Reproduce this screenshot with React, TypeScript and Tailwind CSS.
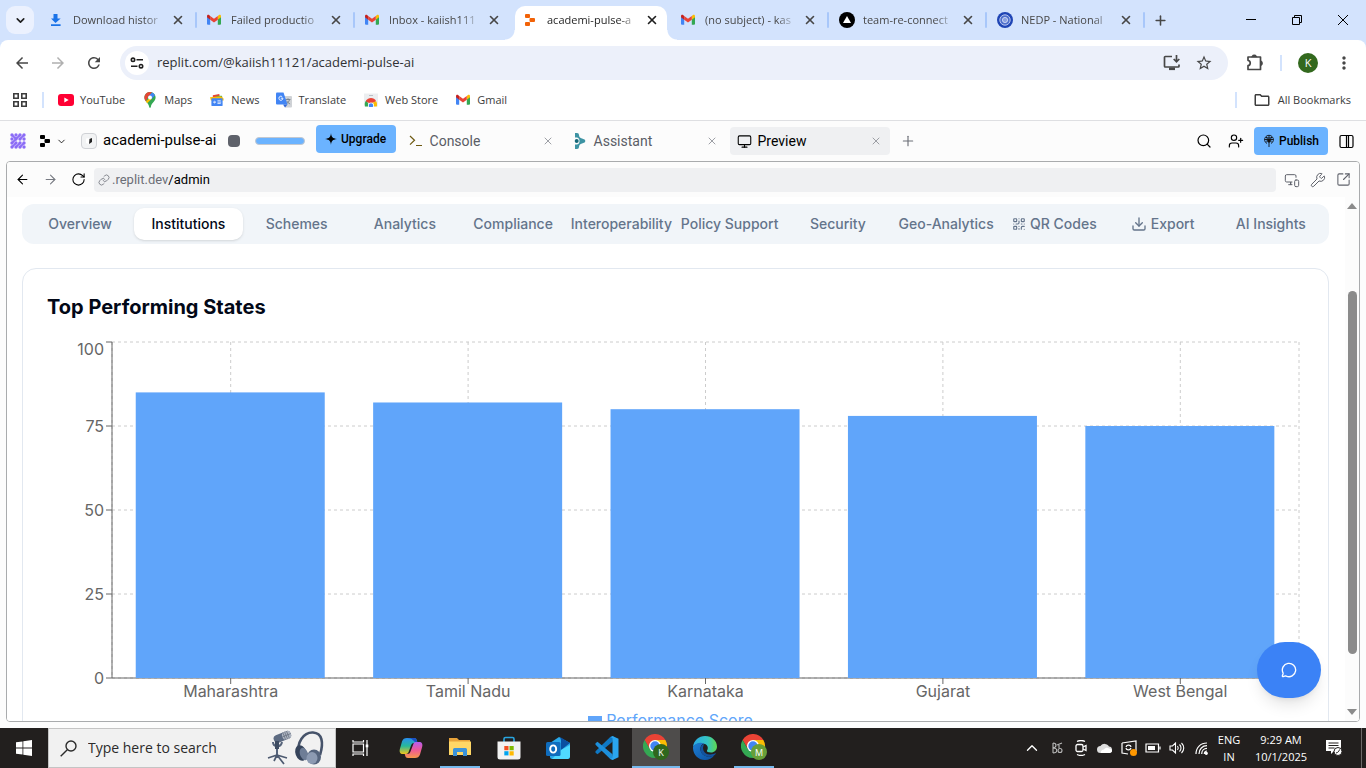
import React, { useEffect, useRef, useState } from 'react';
import {
  ArrowLeft,
  ArrowRight,
  ChevronDown,
  ChevronUp,
  Download,
  Link,
  MessageCircle,
  Monitor,
  MonitorSmartphone,
  Plus,
  QrCode,
  RotateCw,
  Search,
  SquareArrowOutUpRight,
  UserPlus,
  Wrench,
  X,
} from 'lucide-react';
import { MdArrowBack, MdArrowForward, MdMoreVert, MdOutlineFolder, MdRefresh, MdStarBorder } from 'react-icons/md';

type IconProps = { className?: string };

/* ---------- favicons and bookmark icons ---------- */

function GmailIcon({ className = 'w-3.5 h-3.5' }: IconProps) {
  return (
    <svg viewBox="0 0 24 24" className={className} aria-hidden="true">
      <path d="M0 6v12.500A1.600 1.600 0 0 0 1.600 20H5.500V10.300Z" fill="#4285f4" />
      <path d="M24 6v12.500a1.600 1.600 0 0 1-1.600 1.500h-3.900V10.300Z" fill="#34a853" />
      <path d="M18.500 5v6.500L24 7.400V5.600C24 3.200 21.600 2.600 20 3.800Z" fill="#fbbc04" />
      <path d="M5.500 11.500V5L12 9.800 18.500 5v6.500L12 16.400Z" fill="#ea4335" />
      <path d="M0 5.600v1.800l5.500 4.100V5L4 3.800C2.400 2.600 0 3.200 0 5.600Z" fill="#c5221f" />
    </svg>
  );
}

function DownloadFavicon() {
  return (
    <svg viewBox="0 0 14 14" className="w-3.5 h-3.5" aria-hidden="true">
      <path d="M4.500 1h4v4.500h3.200L6.500 10 2 5.500h2.500ZM2 11.200h9.600V13H2Z" fill="#1a73e8" />
    </svg>
  );
}

function ReplitIcon({ className = 'w-3.5 h-3.5', fill = '#f26207' }: IconProps & { fill?: string }) {
  return (
    <svg viewBox="0 0 14 14" className={className} fill={fill} aria-hidden="true">
      <rect x="2" y="1" width="5" height="4" rx="1" />
      <rect x="6.500" y="5" width="5.500" height="4" rx="1" />
      <rect x="2" y="9" width="5" height="4" rx="1" />
    </svg>
  );
}

function VercelIcon() {
  return (
    <svg viewBox="0 0 16 16" className="w-4 h-4" aria-hidden="true">
      <circle cx="8" cy="8" r="8" />
      <path d="m8 4 4 7H4Z" fill="#fff" />
    </svg>
  );
}

function NedpIcon() {
  return (
    <svg viewBox="0 0 16 16" className="w-4 h-4" aria-hidden="true">
      <circle cx="8" cy="8" r="8" fill="#1f45b5" />
      <circle cx="8" cy="8" r="5.200" fill="#4f70cc" stroke="#b6c5ef" strokeWidth="1" />
      <circle cx="8" cy="8" r="2.600" fill="#8ba1e0" stroke="#dbe3f8" strokeWidth="0.800" />
    </svg>
  );
}

function YouTubeIcon() {
  return (
    <svg viewBox="0 0 16 12" className="w-4 h-3" aria-hidden="true">
      <rect width="16" height="12" rx="3" fill="#f03" />
      <path d="m6.300 3.500 4.400 2.500-4.400 2.500Z" fill="#fff" />
    </svg>
  );
}

function MapsIcon() {
  return (
    <svg viewBox="0 0 12 16" className="w-3 h-4" aria-hidden="true">
      <path d="M6 0C2.700 0 .4 2.500.4 5.600c0 3.600 3.900 5.200 4.800 9.300.2 1.200 1.400 1.200 1.600 0 .9-4.100 4.800-5.700 4.800-9.300C11.600 2.500 9.300 0 6 0Z" fill="#34a853" />
      <path d="M6 0C4 0 2.500.9 1.500 2.200L4.400 4.500 8 .4A6 6 0 0 0 6 0Z" fill="#ea4335" />
      <path d="M8 .4 4.400 4.500 7.600 7 11 3.300C10.400 2 9.400.9 8 .4Z" fill="#4285f4" />
      <path d="M4.400 4.500 1.800 9.300C.9 8.100.4 7 .4 5.600c0-1.300.4-2.500 1.100-3.400Z" fill="#ea4335" />
      <path d="m7.600 7-4.400 4.300c-.5-.7-1-1.300-1.400-2L4.500 7Z" fill="#fbbc04" />
      <circle cx="6" cy="5.600" r="2" fill="#fff" />
    </svg>
  );
}

function NewsIcon() {
  return (
    <svg viewBox="0 0 15 13" className="w-3.5 h-3.5" aria-hidden="true">
      <path d="M3 1.500 10 0l.5 4H3Z" fill="#ea4335" />
      <path d="M7 2h6v4H7Z" fill="#34a853" />
      <path d="M0 3.500 12 2.500 14.500 5v2H1Z" fill="#fbbc04" />
      <rect x="1.500" y="4.500" width="12" height="8.500" rx="1" fill="#4285f4" />
      <path d="M6.300 8.600H5v.6h.6c-.3.9-1.700.7-1.700-.4 0-.9 1-1.200 1.600-.6M8 7.300h3.500M8 8.800h4M8 10.300h3.500" stroke="#fff" strokeWidth=".8" fill="none" />
    </svg>
  );
}

function TranslateIcon() {
  return (
    <svg viewBox="0 0 16 15" className="w-4 h-4" aria-hidden="true">
      <path d="M6 3.500h9a1 1 0 0 1 1 1V14a1 1 0 0 1-1 1H9Z" fill="#cfd2d6" />
      <path d="M9.500 7h5M12 5.800V7M13.500 7.200c-.5 2-2 3.500-3.500 4.300M10.600 8.300c.8 1.500 2 2.600 3.500 3.200" stroke="#6b7785" strokeWidth=".8" fill="none" />
      <path d="m7 12 2 3 2.500-3Z" fill="#3367d6" />
      <path d="M1 0h6.500L11.500 12H1a1 1 0 0 1-1-1V1a1 1 0 0 1 1-1Z" fill="#4285f4" />
      <path d="M4.800 5.700h2.100c-.1 2.900-4 2.700-4 .1 0-2.200 2.200-2.700 3.300-1.500" stroke="#fff" strokeWidth=".9" fill="none" />
    </svg>
  );
}

function WebStoreIcon() {
  return (
    <svg viewBox="0 0 14 13" className="w-3.5 h-3.5" aria-hidden="true">
      <path d="M0 0h14v13H0Z" fill="#eceef0" />
      <path d="M1 13C.3 10 1 8 2.500 6.500L5.500 13Z" fill="#34a853" />
      <path d="M1.800 7.800C4 3.500 10 3.500 12.200 7.800L8 9.500H5Z" fill="#ea4335" />
      <path d="M8.500 9.200 12.200 7.800c.9 1.600 1 3.400.6 5.200H8.500Z" fill="#fbbc04" />
      <circle cx="7" cy="12" r="3" fill="#fff" />
      <circle cx="7" cy="12" r="2.200" fill="#4285f4" />
      <path d="M5 2h4" stroke="#bdc1c6" />
    </svg>
  );
}

/* ---------- browser chrome ---------- */

const tabs = [
  { title: 'Download histor', icon: <DownloadFavicon />, divider: true },
  { title: 'Failed productio', icon: <GmailIcon />, divider: true },
  { title: 'Inbox - kaiish111', icon: <GmailIcon />, divider: false },
  { title: 'academi-pulse-a', icon: <ReplitIcon />, active: true, divider: false },
  { title: '(no subject) - kas', icon: <GmailIcon />, divider: true },
  { title: 'team-re-connect', icon: <VercelIcon />, divider: true },
  { title: 'NEDP - National', icon: <NedpIcon />, divider: true },
];

function TabStrip() {
  return (
    <div className="flex h-10 shrink-0 items-end bg-[#d3e3fd] pl-1.5">
      <button aria-label="Search tabs" className="mb-1.5 flex h-7 w-7 shrink-0 items-center justify-center rounded-[9px] bg-[#ebf1fe] text-[#1f1f1f]">
        <ChevronDown size={13} strokeWidth={3} />
      </button>
      <div className="ml-[5px] flex min-w-0">
        {tabs.map((t) => (
          <div key={t.title} className="flex h-[34px] w-[158px] min-w-0 items-center">
            <div
              className={
                t.active
                  ? 'relative mx-0.5 flex h-full min-w-0 flex-1 items-center rounded-t-[10px] bg-white pb-1.5 pl-2 text-[#1f1f1f]'
                  : 'flex h-full min-w-0 flex-1 items-center pb-1.5 pl-2.5 text-[#474747]'
              }
            >
              {t.active && (
                <>
                  <span className="absolute bottom-0 -left-2.5 h-2.5 w-2.5 bg-[radial-gradient(circle_at_0_0,transparent_9px,white_10px)]" />
                  <span className="absolute -right-2.5 bottom-0 h-2.5 w-2.5 bg-[radial-gradient(circle_at_100%_0,transparent_9px,white_10px)]" />
                </>
              )}
              <button className="flex min-w-0 flex-1 items-center gap-2 text-left text-[11px] leading-4">
                <span className="flex w-4 shrink-0 items-center">{t.icon}</span>
                <span className="min-w-0 flex-1 overflow-hidden whitespace-nowrap [mask-image:linear-gradient(to_right,black_78%,transparent)]">{t.title}</span>
              </button>
              <button aria-label={`Close ${t.title}`} className={t.active ? 'mr-2 ml-1.5 shrink-0' : 'mr-2.5 ml-1.5 shrink-0'}>
                <X size={14} strokeWidth={2.8} />
              </button>
            </div>
            <span className={t.divider ? 'mb-1.5 h-4 w-0.5 shrink-0 rounded bg-[#a8c7fa]' : 'h-4 w-0.5 shrink-0'} />
          </div>
        ))}
      </div>
      <button aria-label="New tab" className="mb-1.5 ml-px flex h-7 w-7 shrink-0 items-center justify-center text-[#474747]">
        <Plus size={15} strokeWidth={2.5} />
      </button>
      <div className="ml-auto flex h-10 shrink-0 items-center text-black">
        <button aria-label="Minimize" className="flex h-full w-[46px] items-center justify-center">
          <svg className="h-2.5 w-2.5" viewBox="0 0 10 10" stroke="currentColor"><path d="M0 4.500h10" /></svg>
        </button>
        <button aria-label="Restore" className="flex h-full w-[46px] items-center justify-center">
          <svg className="h-2.5 w-2.5" viewBox="0 0 10 10" stroke="currentColor" fill="none"><path d="M.5 2.500h7v7h-7ZM2.500 2.500v-2h7v7h-2" /></svg>
        </button>
        <button aria-label="Close window" className="flex h-full w-[46px] items-center justify-center">
          <svg className="h-2.5 w-2.5" viewBox="0 0 10 10" stroke="currentColor"><path d="m0 0 10 10M10 0 0 10" /></svg>
        </button>
      </div>
    </div>
  );
}

function AddressRow() {
  return (
    <div className="shrink-0 bg-[#d3e3fd]">
      <div className="flex h-[46px] items-center rounded-t-lg bg-white pr-3 pl-3 text-[#474747]">
        <button aria-label="Back" className="mr-4 p-px"><MdArrowBack size={18} /></button>
        <button aria-label="Forward" className="mr-4 p-px text-[#b0b0b0]"><MdArrowForward size={18} /></button>
        <button aria-label="Reload" className="mr-4 p-px"><MdRefresh size={18} /></button>
        <div className="flex h-[34px] min-w-0 flex-1 items-center rounded-full bg-[#ecf0fa] pr-[15px] pl-[5px]">
          <button aria-label="Site information" className="flex h-6 w-6 shrink-0 items-center justify-center rounded-full bg-white text-[#1f1f1f]">
            <svg viewBox="0 0 14 14" className="h-3.5 w-3.5" fill="none" stroke="currentColor" strokeWidth="1.600">
              <circle cx="3" cy="3.800" r="1.700" /><path d="M6.500 3.800H13M1 10.200h6.500" /><circle cx="11" cy="10.200" r="1.700" />
            </svg>
          </button>
          <input aria-label="Address" defaultValue="replit.com/@kaiish11121/academi-pulse-ai" className="ml-2 min-w-0 flex-1 bg-transparent text-[13px] text-[#303134] outline-none" />
          <button aria-label="Install app" className="mr-3.5">
            <svg viewBox="0 0 18 16" className="h-4 w-[18px]" fill="none" stroke="currentColor" strokeWidth="1.700">
              <path d="M9 1.500H2.300A.8.800 0 0 0 1.500 2.300v8.900c0 .5.300.8.800.8h12.900c.5 0 .8-.3.800-.8V9.500" />
              <path d="M13.500 0v6.500M10.700 4l2.800 2.900L16.300 4" /><path d="M6 13.800h6" strokeWidth="2.600" />
            </svg>
          </button>
          <button aria-label="Bookmark this tab"><MdStarBorder size={18} /></button>
        </div>
        <button aria-label="Extensions" className="ml-[18px]">
          <svg viewBox="0 0 18 18" className="h-[18px] w-[18px]" fill="none" stroke="currentColor" strokeWidth="1.700">
            <path d="M2 3h12.500v12.500H2v-3.800c3-.5 3-4.900 0-5.400Z" strokeLinejoin="round" />
            <path d="M6.500 2.500a2 2 0 0 1 3.500 0ZM15 7.500a2 2 0 0 1 0 3.500Z" fill="currentColor" />
          </svg>
        </button>
        <span className="mx-4 h-4 w-0.5 bg-[#d3e3fd]" />
        <button aria-label="Profile" className="flex h-5 w-5 items-center justify-center rounded-full bg-[#33691e] text-[11px] text-white">K</button>
        <button aria-label="Menu" className="ml-4"><MdMoreVert size={20} /></button>
      </div>
    </div>
  );
}

const bookmarks = [
  { label: 'YouTube', icon: <YouTubeIcon /> },
  { label: 'Maps', icon: <MapsIcon /> },
  { label: 'News', icon: <NewsIcon /> },
  { label: 'Translate', icon: <TranslateIcon /> },
  { label: 'Web Store', icon: <WebStoreIcon /> },
  { label: 'Gmail', icon: <GmailIcon /> },
];

function BookmarksBar() {
  return (
    <div className="flex h-[35px] shrink-0 items-center border-b border-[#dedfe2] bg-white pr-[15px] pb-1.5 pl-[13px] text-[11px] text-[#3c3c3c]">
      <button aria-label="Apps">
        <svg viewBox="0 0 14 14" className="h-3.5 w-3.5" fill="none" stroke="currentColor" strokeWidth="1.600">
          <path d="M.8.800h4.400v4.400H.8ZM8.800.800h4.400v4.400H8.800ZM.8 8.800h4.400v4.400H.8ZM8.800 8.800h4.400v4.400H8.800Z" />
        </svg>
      </button>
      <span className="mr-3.5 ml-[15px] h-4 w-0.5 bg-[#d3e3fd]" />
      <nav aria-label="Bookmarks" className="flex items-center gap-[17px]">
        {bookmarks.map((b) => (
          <a key={b.label} href="#" className="flex items-center gap-1.5">
            <span className="flex w-4 justify-center">{b.icon}</span>
            {b.label}
          </a>
        ))}
      </nav>
      <span className="mr-4 ml-auto h-4 w-0.5 bg-[#d3e3fd]" />
      <button className="flex items-center gap-[7px]"><MdOutlineFolder size={18} />All Bookmarks</button>
    </div>
  );
}

/* ---------- workspace ---------- */

function DotsIcon() {
  return (
    <svg viewBox="0 0 16 16" className="h-4 w-4" fill="#8b6cf6" stroke="#8b6cf6" aria-hidden="true">
      {[2, 6, 10, 14].map((y) => [2, 6, 10, 14].map((x) => <circle key={`${x}-${y}`} cx={x} cy={y} r="1.700" stroke="none" />))}
      <path d="m2 2 4 4M10 2 6 6M14 2l-4 4M2 10l4-4M6 14l4-4M10 14l4-4M2 14l4-4" strokeWidth="1.800" />
    </svg>
  );
}

function WorkspaceHeader() {
  const panes = [
    {
      label: 'Console',
      active: false,
      icon: (
        <svg viewBox="0 0 14 14" className="h-3.5 w-3.5" fill="none" stroke="#6e5a12" strokeWidth="1.200"><path d="m1 2 4.500 4.300L1 10.600M7 11.500h6" /></svg>
      ),
    },
    {
      label: 'Assistant',
      active: false,
      icon: (
        <svg viewBox="0 0 12 16" className="h-4 w-3" fill="#3d93a3">
          <path d="M1 0h2a2 2 0 0 1 2 2c0 2 1 3 3 3.500l2.500 1c1 .5 1 2.500 0 3L8 10.500c-2 .5-3 1.500-3 3.500a2 2 0 0 1-2 2H1v-4.500h2c2-.5 2.500-2 2.500-3.500S5 5 3 4.500H1Z" />
          <circle cx="2.700" cy="8" r="2" fill="#16697a" />
        </svg>
      ),
    },
    { label: 'Preview', active: true, icon: <Monitor size={15} strokeWidth={1.700} /> },
  ];
  return (
    <header className="flex h-10 shrink-0 items-center pr-3 pl-2.5 text-sm text-black">
      <button aria-label="Home"><DotsIcon /></button>
      <button aria-label="Workspace menu" className="ml-3 flex items-center gap-1">
        <ReplitIcon className="h-3.5 w-3.5" fill="#000" />
        <ChevronDown size={11} strokeWidth={1.800} />
      </button>
      <button className="ml-3.5 flex items-center gap-1.5 whitespace-nowrap text-[15px]">
        <span className="flex h-4 w-4 items-center justify-center rounded border border-[#d0d2d6] bg-[#f2f3f4]">
          <svg viewBox="0 0 8 8" className="h-2 w-2"><path d="M1 1.500 4 1v6L1 6Z" fill="#fff" /><path d="M4.500 2 7 1v4L4 7Z" fill="#222" /></svg>
        </span>
        academi-pulse-ai
      </button>
      <button aria-label="Stop" className="ml-[11px] h-3 w-3 rounded-sm bg-[#5f626b]" />
      <div className="ml-[15px] h-2 w-[50px] rounded-full border border-[#c3c8d0] bg-[#6bb3ff]" />
      <button className="mb-1 ml-[11px] flex h-7 w-20 items-center justify-center gap-1 rounded bg-[#6bb3ff] text-xs font-medium">
        <svg viewBox="0 0 12 12" className="h-3 w-3"><path d="M6 0c.4 4 1.500 5.400 6 6-4.500.6-5.600 2-6 6-.4-4-1.500-5.400-6-6 4.500-.6 5.600-2 6-6Z" /></svg>
        Upgrade
      </button>
      <div className="ml-1.5 flex gap-1">
        {panes.map((p) => (
          <div
            key={p.label}
            className={
              p.active
                ? 'flex h-7 w-40 items-center rounded bg-[#eff0f2] px-[7px] text-black'
                : 'flex h-7 w-40 items-center rounded px-[7px] text-[#5a5d66]'
            }
          >
            <button className="flex flex-1 items-center gap-1.5">
              <span className="flex w-[15px] justify-center">{p.icon}</span>
              {p.label}
            </button>
            <button aria-label={`Close ${p.label}`} className="p-px text-[#8c8f96]"><X size={12} strokeWidth={1.700} /></button>
          </div>
        ))}
      </div>
      <button aria-label="New pane" className="ml-2.5 text-[#6b6e76]"><Plus size={16} strokeWidth={1.700} /></button>
      <div className="ml-auto flex items-center">
        <button aria-label="Search"><Search size={16} strokeWidth={1.800} /></button>
        <button aria-label="Invite" className="ml-4"><UserPlus size={16} strokeWidth={1.700} /></button>
        <button className="ml-2.5 flex h-7 w-[74px] items-center justify-center gap-1 rounded bg-[#6bb3ff] text-xs font-medium">
          <svg viewBox="0 0 12 13" className="h-3.5 w-3" fill="none" stroke="#111" strokeWidth=".9">
            <path d="M3.800 9A4.400 4.400 0 1 1 8.200 9M1.600 5h8.800M3.500 2.500C4.500 4 4.500 6 3.700 8M8.500 2.500C7.500 4 7.500 6 8.300 8M3 2.800c2 1 4 1 6 0M6 1v11.500" /><circle cx="6" cy="6.500" r="1.200" fill="#111" />
          </svg>
          Publish
        </button>
        <button aria-label="Toggle sidebar" className="ml-[11px]">
          <svg viewBox="0 0 15 15" className="h-[15px] w-[15px]" fill="none" stroke="currentColor" strokeWidth="1.200"><rect x="1" y="1.500" width="13" height="12" rx="1.500" /><path d="M7.500 1.500v12M9.500 1.500v12" /></svg>
        </button>
      </div>
    </header>
  );
}

function PreviewBar() {
  return (
    <div className="flex h-[35px] shrink-0 items-center bg-[#fcfcfc] pr-2 pl-2 text-[#3f4249]">
      <button aria-label="Preview back" className="mr-[13px] text-black"><ArrowLeft size={15} strokeWidth={1.700} /></button>
      <button aria-label="Preview forward" className="mr-[13px] text-[#777a82]"><ArrowRight size={15} strokeWidth={1.700} /></button>
      <button aria-label="Preview reload" className="mr-2 text-black"><RotateCw size={15} strokeWidth={1.700} /></button>
      <label className="flex h-6 min-w-0 flex-1 items-center rounded bg-[#eff0f2] pl-1 text-xs">
        <Link size={12} strokeWidth={1.700} className="mr-0.5 text-[#777a82]" />
        <span className="text-[13px] text-[#6b6e76]">.replit.dev</span>
        <input defaultValue="/admin" className="min-w-0 flex-1 bg-transparent text-[13px] text-black outline-none" />
      </label>
      <div className="ml-2 flex gap-2.5 text-[#5f626b]">
        <button aria-label="Device size"><MonitorSmartphone size={16} strokeWidth={1.500} /></button>
        <button aria-label="Developer tools"><Wrench size={16} strokeWidth={1.500} /></button>
        <button aria-label="Open in new tab"><SquareArrowOutUpRight size={15} strokeWidth={1.700} /></button>
      </div>
    </div>
  );
}

/* ---------- dashboard ---------- */

const sections = ['Overview', 'Institutions', 'Schemes', 'Analytics', 'Compliance', 'Interoperability', 'Policy Support', 'Security', 'Geo-Analytics', 'QR Codes', 'Export', 'AI Insights'];

const states = [
  { name: 'Maharashtra', score: 85 },
  { name: 'Tamil Nadu', score: 82 },
  { name: 'Karnataka', score: 80 },
  { name: 'Gujarat', score: 78 },
  { name: 'West Bengal', score: 75 },
];

function ScoreChart() {
  const box = useRef<HTMLDivElement>(null);
  const [width, setWidth] = useState(1257);
  useEffect(() => {
    const el = box.current;
    if (!el) return;
    const observer = new ResizeObserver(() => setWidth(el.clientWidth));
    observer.observe(el);
    return () => observer.disconnect();
  }, []);
  const left = 65;
  const right = width - 5;
  const top = 5;
  const bottom = 341;
  const band = (right - left) / states.length;
  const yOf = (v: number) => bottom - ((bottom - top) * v) / 100;
  const ticks = [0, 25, 50, 75, 100];
  return (
    <div ref={box} className="mt-4">
      <svg width={width} height={371} className="block" fontSize="16" role="img" aria-label="Performance score by state">
        <g stroke="#ccc" strokeDasharray="3 3">
          {ticks.map((t) => <line key={t} x1={left} x2={right} y1={yOf(t)} y2={yOf(t)} />)}
          {[left, ...states.map((_, i) => left + band * (i + 0.5)), right].map((x) => <line key={x} x1={x} x2={x} y1={top} y2={bottom} />)}
        </g>
        <g stroke="#666">
          <path d={`M${left} ${top}V${bottom}H${right}`} fill="none" />
          {ticks.map((t) => <line key={t} x1={left - 6} x2={left} y1={yOf(t)} y2={yOf(t)} />)}
          {states.map((s, i) => <line key={s.name} x1={left + band * (i + 0.5)} x2={left + band * (i + 0.5)} y1={bottom} y2={bottom + 6} />)}
        </g>
        {states.map((s, i) => (
          <rect key={s.name} x={left + band * (i + 0.1)} width={Math.floor(band * 0.8)} y={yOf(s.score)} height={bottom - yOf(s.score)} fill="#60a5fa" />
        ))}
        <g fill="#666">
          {ticks.map((t) => <text key={t} x={left - 8} y={t === 100 ? 18 : yOf(t) + 6} textAnchor="end">{t}</text>)}
          {states.map((s, i) => <text key={s.name} x={left + band * (i + 0.5)} y={bottom + 19} textAnchor="middle">{s.name}</text>)}
        </g>
      </svg>
      <div className="flex h-6 items-center justify-center gap-1 pr-2.5 text-base text-[#60a5fa]">
        <span className="h-2 w-3.5 bg-[#60a5fa]" />
        Performance Score
      </div>
    </div>
  );
}

function Dashboard() {
  return (
    <div className="relative flex min-h-0 flex-1 bg-white font-['Inter',sans-serif]">
      <main className="min-w-0 flex-1 overflow-hidden pt-[7px] pr-4 pl-[15px]">
        <div role="tablist" className="grid h-10 grid-cols-12 rounded-xl bg-[#f1f5f9] p-1 text-sm font-medium text-[#64748b]">
          {sections.map((s) => (
            <button
              key={s}
              role="tab"
              aria-selected={s === 'Institutions'}
              className={
                s === 'Institutions'
                  ? 'flex items-center justify-center rounded-[10px] bg-white whitespace-nowrap text-[#020817] shadow-sm'
                  : 'flex items-center justify-center gap-1 whitespace-nowrap'
              }
            >
              {s === 'QR Codes' && <QrCode size={14} className="shrink-0" />}
              {s === 'Export' && <Download size={16} className="shrink-0" />}
              {s}
            </button>
          ))}
        </div>
        <section className="mt-6 rounded-[14px] border border-[#e2e8f0] p-6">
          <h2 className="text-xl font-bold text-[#020817]">Top Performing States</h2>
          <ScoreChart />
        </section>
      </main>
      <div className="flex w-3.5 shrink-0 flex-col items-center bg-[#fcfcfc] py-1.5 text-[#8b8b8b]" aria-hidden="true">
        <svg viewBox="0 0 10 6" className="h-1.5 w-2.5" fill="currentColor"><path d="m5 0 5 6H0Z" /></svg>
        <div className="flex-[82]" />
        <div className="w-[9px] flex-[363] rounded-full bg-[#8b8b8b]" />
        <div className="flex-[55]" />
        <svg viewBox="0 0 10 6" className="h-1.5 w-2.5" fill="currentColor"><path d="M0 0h10L5 6Z" /></svg>
      </div>
      <button aria-label="Open chat" className="absolute right-[38px] bottom-[23px] flex h-14 w-16 items-center justify-center rounded-[28px] bg-[#3b82f6] text-white shadow-lg">
        <MessageCircle size={16} strokeWidth={2} />
      </button>
    </div>
  );
}

/* ---------- taskbar ---------- */

function CopilotIcon() {
  return (
    <svg viewBox="0 0 24 22" className="h-[22px] w-6">
      <defs>
        <linearGradient id="cpA" x1="0" y1="0" x2="0" y2="1"><stop offset="0" stopColor="#2a8ff0" /><stop offset=".5" stopColor="#26b99a" /><stop offset="1" stopColor="#f3c51b" /></linearGradient>
        <linearGradient id="cpB" x1="0" y1="0" x2="0" y2="1"><stop offset="0" stopColor="#b65cf0" /><stop offset=".5" stopColor="#ee5a96" /><stop offset="1" stopColor="#f7984a" /></linearGradient>
      </defs>
      <path d="M8 1h7c2 0 2.500 1 3 3l.5 2h-3c-2 0-3 .8-3.500 2.500L10 14c-.6 2-1.500 3-3 3H4c-3 0-4-2-3-5.500l2-7C3.800 2 5.500 1 8 1Z" fill="url(#cpA)" />
      <path d="M16 21H9c-2 0-2.500-1-3-3l-.3-1H8c2 0 3-.8 3.500-2.500L14 8c.6-2 1.500-3 3-3h3c3 0 4 2 3 5.500l-2 7c-.8 2.500-2.500 3.500-5 3.500Z" fill="url(#cpB)" />
      <path d="M8 1h7c2 0 2.500 1 3 3l.3 1H16c-2-1-2-4-8-4Z" fill="#1b4fc4" />
    </svg>
  );
}

function FolderIcon() {
  return (
    <svg viewBox="0 0 24 20" className="h-5 w-6">
      <path d="M1 1h8l2 2h11v4H1Z" fill="#e8a33a" />
      <path d="M1 4.500h22V18H1Z" fill="#ffd766" />
      <path d="M5 19v-6.500a1.500 1.500 0 0 1 1.500-1.500h11a1.500 1.500 0 0 1 1.500 1.500V19h-4v-4H9v4Z" fill="#3c93d9" />
    </svg>
  );
}

function StoreIcon() {
  return (
    <svg viewBox="0 0 24 24" className="h-6 w-6">
      <path d="M7 6V3c0-1 .5-1.500 1.500-1.500h7c1 0 1.500.5 1.500 1.500v3" fill="none" stroke="#29a5e0" strokeWidth="1.600" />
      <path d="M.5 5.500h23V21a2.500 2.500 0 0 1-2.500 2.500H3A2.500 2.500 0 0 1 .5 21Z" fill="#f2f2f2" />
      <path d="M7.300 10h4.200v4.200H7.300Z" fill="#f25022" /><path d="M12.500 10h4.200v4.200h-4.200Z" fill="#7fba00" />
      <path d="M7.300 15.200h4.200v4.200H7.300Z" fill="#00a4ef" /><path d="M12.500 15.200h4.200v4.200h-4.200Z" fill="#ffb900" />
    </svg>
  );
}

function OutlookIcon() {
  return (
    <svg viewBox="0 0 24 22" className="h-[22px] w-6">
      <path d="m4 6 9-6 11 6v14a2 2 0 0 1-2 2H6a2 2 0 0 1-2-2Z" fill="#28a8ea" />
      <path d="m14 0 10 6-9 7V3Z" fill="#0a4fa0" /><path d="M24 8v12l-2 2H6l9-9Z" fill="#50d9ff" />
      <rect y="5" width="14.500" height="14" rx="1.500" fill="#0f6cbd" />
      <ellipse cx="7.200" cy="12" rx="3" ry="3.600" fill="none" stroke="#fff" strokeWidth="1.900" />
    </svg>
  );
}

function CodeIcon() {
  return (
    <svg viewBox="0 0 24 24" className="h-6 w-6">
      <path d="m17.500 5.800-15 12.500L.5 16.700v-1.500l15-14.500 3-.5Z" fill="#0f78c4" />
      <path d="m17.500 18.200-15-12.500L.5 7.300v1.500l15 14.500 3 .5Z" fill="#1d8fdb" />
      <path d="m17.500 0 6 2.800v18.400l-6 2.800-2-1.300 2-.8V2.100l-2-.8Z" fill="#2aa5ef" />
    </svg>
  );
}

function ChromeIcon({ letter, badge }: { letter: string; badge: string }) {
  return (
    <svg viewBox="0 0 26 26" className="h-[26px] w-[26px]">
      <path d="M1.600 6A12 12 0 0 1 22.400 6H12L6.800 15Z" fill="#ea4335" />
      <path d="M22.400 6A12 12 0 0 1 12 24l5.200-9L12 6Z" fill="#fbbc04" />
      <path d="M12 24A12 12 0 0 1 1.600 6l5.200 9 5.200 3h5.200Z" fill="#34a853" />
      <circle cx="12" cy="12" r="6" fill="#fff" /><circle cx="12" cy="12" r="4.700" fill="#4285f4" />
      <circle cx="18" cy="18" r="8" fill={badge} />
      <text x="18" y="21.500" textAnchor="middle" fontSize="9" fill="#fff">{letter}</text>
    </svg>
  );
}

function EdgeIcon() {
  return (
    <svg viewBox="0 0 24 24" className="h-6 w-6">
      <defs>
        <linearGradient id="edA" x1="0" x2="1"><stop offset="0" stopColor="#2aa9e6" /><stop offset=".6" stopColor="#35c5c3" /><stop offset="1" stopColor="#5fd94f" /></linearGradient>
        <linearGradient id="edB" x1="0" y1="0" x2="1" y2="1"><stop offset="0" stopColor="#1d7fd4" /><stop offset="1" stopColor="#0c4f9e" /></linearGradient>
      </defs>
      <path d="M0 11C.5 4.500 6 0 12 0c7 0 12 5 12 10.500 0 3.500-2.500 6-6 6-3 0-4.500-1-4-2 1.500-2 1-5.500-2-6.500C7 6 2.500 8 0 11Z" fill="url(#edA)" />
      <path d="M0 11c2.500-4 7.500-5 11-3.500-3 1-4 4-3.500 6.500.8 4.500 5 7 9 6.500 2 0 3.500-.6 5-1.500C19 22.500 16 24 12 24 5 24-.4 18 0 11Z" fill="url(#edB)" />
      <path d="M7.500 14c-.5-3 1.500-6 4-6-3.500 4-.5 11 6 10.500 2 0 3.500-.6 4.700-1.200.5-.2.800.2.500.700C19.500 22 8.500 22 7.500 14Z" fill="#12539f" />
    </svg>
  );
}

function PodcastArt() {
  return (
    <svg viewBox="0 0 58 36" className="h-9 w-[58px]" aria-hidden="true">
      <g transform="rotate(-22 15 6)"><rect x="6" y="3" width="18" height="8" rx="3.500" fill="#5d6b82" /><rect x="15" y="3" width="9" height="8" rx="3.500" fill="#aeb5c2" /><path d="M17 3v8M19 3v8M21 3v8M15 7h9" stroke="#5c6473" strokeWidth=".6" /></g>
      <path d="M6 12c0 5 8 6 9 0M10 15v13" stroke="#56647b" strokeWidth="2" fill="none" /><path d="M8 11h4v8H8Z" fill="#3f4d63" />
      <path d="M10 25 1 28M10 25l10 3M10 25l7 9M10 25l-3 6" stroke="#4d5a70" strokeWidth="1.700" />
      <path d="M32 25C29 12 37 2 46 2.500S57 12 53 25" stroke="#46536a" strokeWidth="2.600" fill="none" />
      <ellipse cx="34" cy="23" rx="5.500" ry="8" transform="rotate(-20 34 23)" fill="#35435a" />
      <ellipse cx="37" cy="24" rx="4" ry="6.500" transform="rotate(-20 37 24)" fill="#6e7d96" />
      <ellipse cx="47" cy="27" rx="7" ry="7.500" fill="#55647d" /><ellipse cx="45" cy="28" rx="5.500" ry="6" fill="#8c9ab2" />
    </svg>
  );
}

const apps = [
  { name: 'Copilot', icon: <CopilotIcon />, state: 'idle' },
  { name: 'File Explorer', icon: <FolderIcon />, state: 'open' },
  { name: 'Microsoft Store', icon: <StoreIcon />, state: 'idle' },
  { name: 'Outlook', icon: <OutlookIcon />, state: 'idle' },
  { name: 'Visual Studio Code', icon: <CodeIcon />, state: 'idle' },
  { name: 'Chrome, profile K', icon: <ChromeIcon letter="K" badge="#2f671d" />, state: 'focused' },
  { name: 'Edge', icon: <EdgeIcon />, state: 'idle' },
  { name: 'Chrome, profile M', icon: <ChromeIcon letter="M" badge="#689f38" />, state: 'open' },
];

function TrayIcons() {
  const cls = 'h-4 w-4';
  return (
    <div className="flex items-center gap-2">
      <ChevronUp size={18} strokeWidth={1.800} />
      <svg viewBox="0 0 16 16" className={cls} fill="none" stroke="#b8b8b8" strokeWidth="1.100"><path d="M4 3v10M4 3c4 0 4 4.500 0 5M4 8c5 0 5 5 0 5M8 5l5-2M10 4v4" /><circle cx="11" cy="10.500" r="2" /></svg>
      <svg viewBox="0 0 16 16" className={cls} fill="none" stroke="#fff" strokeWidth="1.300"><rect x="3" y="4.500" width="7" height="7" rx="1.500" /><path d="m10 7 3-1.500v5L10 9M4 1.500c3-1.500 5-1.500 8 0M4 14.500c3 1.500 5 1.500 8 0" /></svg>
      <svg viewBox="0 0 16 16" className={cls}><path d="M3.500 13a3.500 3.500 0 0 1 0-7A5 5 0 0 1 12 6.500a3.300 3.300 0 0 1 .5 6.500Z" fill="#ddd" /><path d="M4 13c-.5-2 1-3.500 3-3.500 1-2 4-2.500 5-1 4 0 4 4.500.5 4.500Z" fill="#fff" /></svg>
      <svg viewBox="0 0 16 16" className={cls} fill="none" stroke="#fff" strokeWidth="1.200"><path d="m1 3 14-2v10M1 3v10l6 1M5 7c1-3 5-2 5 0M10 8c-1 3-5 2-5 0" /><circle cx="12.500" cy="12.500" r="3.500" fill="#ff9800" stroke="none" /></svg>
      <svg viewBox="0 0 16 16" className={cls} fill="none" stroke="#fff" strokeWidth="1.200"><path d="M1 4h12.500v8H1ZM15 6.500v3" /><path d="M3 6h7v4H3Z" fill="#fff" stroke="none" /></svg>
      <svg viewBox="0 0 16 16" className={cls} fill="none" stroke="#fff" strokeWidth="1.100"><path d="M1 6h2.500L6.500 3v10l-3-3H1ZM8.500 6c1 1.300 1 2.700 0 4M10.500 4.500c2 2 2 5 0 7M12.500 3c3 3 3 7 0 10" /></svg>
      <svg viewBox="0 0 16 16" className={cls} fill="none" stroke="#fff" strokeWidth="1.200"><path d="M3 14C3 7.500 7.500 3 14 3M6 14c0-5 3.500-8.300 8-8.300M8.700 14c0-3.300 2.300-5.600 5.300-5.600M11.300 14c0-1.800 1.200-3 2.700-3" /><circle cx="13.300" cy="13.300" r="1" fill="#fff" /></svg>
    </div>
  );
}

function Taskbar() {
  return (
    <footer className="flex h-10 shrink-0 items-center bg-[#221f1e] text-white">
      <button aria-label="Start" className="flex h-full w-12 items-center justify-center">
        <svg viewBox="0 0 16 16" className="h-4 w-4" fill="#fff"><path d="m0 2.300 6.500-.9v6.200H0ZM7.300 1.300 16 0v7.600H7.300ZM0 8.400h6.500v6.200L0 13.700ZM7.300 8.400H16V16l-8.700-1.200Z" /></svg>
      </button>
      <label className="flex h-full w-72 shrink-0 items-center border border-[#c4c4c4] bg-[#f1f1f1] pr-2.5 pl-[11px] text-[#2b2b2b]">
        <svg viewBox="0 0 17 17" className="h-[17px] w-[17px]" fill="none" stroke="currentColor" strokeWidth="1.400"><circle cx="11" cy="6" r="5" /><path d="M7.300 9.700.7 16.300" /></svg>
        <input aria-label="Type here to search" placeholder="Type here to search" className="ml-[11px] min-w-0 flex-1 bg-transparent text-sm outline-none placeholder:text-[#2b2b2b]" />
        <PodcastArt />
      </label>
      <button aria-label="Task view" className="flex h-full w-12 items-center justify-center">
        <svg viewBox="0 0 17 16" className="h-4 w-[17px]" fill="none" stroke="#fff" strokeWidth="1.200"><path d="M1 4h10.500v8H1ZM1 0v2h10.500V0M1 16v-2h10.500v2M15 0v16" /><path d="M13.700 4.500h2.600v2.800h-2.600Z" fill="#fff" stroke="none" /></svg>
      </button>
      <div className="ml-[3px] flex h-full gap-px">
        {apps.map((a) => (
          <button
            key={a.name}
            aria-label={a.name}
            className={a.state === 'focused' ? 'flex h-full w-12 flex-col items-center border-b-2 border-[#76b9ed] bg-[#4e4c4b]' : 'flex h-full w-12 flex-col items-center'}
          >
            <span className="flex min-h-0 w-full flex-1 items-center justify-center">{a.icon}</span>
            {a.state === 'open' && <span className="h-0.5 w-10 bg-[#76b9ed]" />}
          </button>
        ))}
      </div>
      <div className="ml-auto flex h-full items-center text-[11px]">
        <TrayIcons />
        <div className="flex w-10 flex-col items-center leading-[17px]"><span>ENG</span><span>IN</span></div>
        <div className="flex w-16 flex-col items-center leading-[17px] whitespace-nowrap"><span>9:29 AM</span><span>10/1/2025</span></div>
        <svg viewBox="0 0 18 18" className="mr-[18px] ml-3 h-[18px] w-[18px]"><path d="M1 1h15v11H9l-3 3v-3H1Z" fill="#fff" /><path d="M3.500 4h10M3.500 6.500h10M3.500 9h6" stroke="#221f1e" strokeWidth="1.100" /><circle cx="13" cy="12.500" r="4" fill="#fff" stroke="#221f1e" /><path d="M14.500 10.500c-.5 2-1.500 3-3.500 3.500" stroke="#221f1e" fill="none" /></svg>
        <span className="mr-1 h-full w-px bg-[#6c6a69]" />
      </div>
    </footer>
  );
}

export default function App() {
  return (
    <div className="flex h-screen flex-col overflow-hidden bg-[#fcfcfc] font-['Open_Sans','Noto_Sans',sans-serif]">
      <TabStrip />
      <AddressRow />
      <BookmarksBar />
      <div className="flex min-h-0 flex-1 flex-col font-['Roboto','Liberation_Sans',sans-serif]">
        <WorkspaceHeader />
        <div className="mx-1.5 mb-1.5 flex min-h-0 flex-1 flex-col overflow-hidden rounded border border-[#a9abad]">
          <PreviewBar />
          <Dashboard />
        </div>
      </div>
      <Taskbar />
    </div>
  );
}
